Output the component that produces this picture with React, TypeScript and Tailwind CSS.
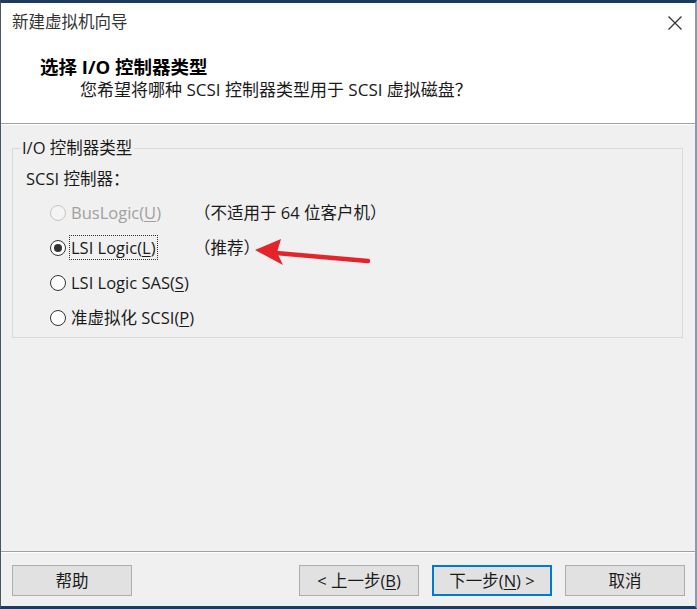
import React from "react";

const font = "font-['Open_Sans','Noto_Sans_CJK_SC',sans-serif]";

function Radio({ checked, disabled }: { checked?: boolean; disabled?: boolean }) {
  return (
    <span
      className={`flex h-[16px] w-[16px] shrink-0 items-center justify-center rounded-full border ${
        disabled ? "border-[#c4c4c4] bg-[#f4f4f4]" : "border-[#333333] bg-white"
      }`}
    >
      {checked && <span className="h-[8px] w-[8px] rounded-full bg-[#333333]" />}
    </span>
  );
}

function Row({
  label,
  keyChar,
  note,
  checked,
  disabled,
  focus,
}: {
  label: string;
  keyChar: string;
  note?: string;
  checked?: boolean;
  disabled?: boolean;
  focus?: boolean;
}) {
  return (
    <div className="ml-[24px] flex h-[20px] items-center whitespace-nowrap">
      <Radio checked={checked} disabled={disabled} />
      <div className="ml-[4px] w-[124px] shrink-0 whitespace-nowrap">
        <span
          className={`px-[1px] ${disabled ? "text-[#a0a0a0]" : "text-[#1a1a1a]"} ${
            focus ? "outline outline-1 outline-dotted outline-[#333]" : ""
          }`}
        >
          {label}(<span className="underline underline-offset-2">{keyChar}</span>)
        </span>
      </div>
      {note && <span className="text-[#1a1a1a]">{note}</span>}
    </div>
  );
}

function Btn({ children, primary }: { children: React.ReactNode; primary?: boolean }) {
  return (
    <div
      className={`flex h-[31px] w-[120px] items-center justify-center whitespace-nowrap bg-[#e1e1e1] text-[#1a1a1a] ${
        primary ? "border-2 border-[#0078d7]" : "border border-[#adadad]"
      }`}
    >
      {children}
    </div>
  );
}

export default function App() {
  return (
    <div
      className={`relative flex h-[609px] w-[697px] flex-col overflow-hidden border-t-[3px] border-b-[3px] border-l border-r-2 border-t-[#1d3a63] border-b-[#1d3a63] border-l-[#4a5568] border-r-[#8e9aab] bg-[#f0f0f0] text-[16.5px] leading-[20px] ${font}`}
    >
      {/* Header */}
      <div className="flex h-[120px] flex-col bg-white pt-[9px]">
        <div className="flex h-[20px] items-center justify-between pl-[11px] pr-[12px]">
          <span className="text-[#333333]">新建虚拟机向导</span>
          <svg width="16" height="16" viewBox="0 0 16 16" className="mt-[2px]">
            <path d="M1.5 1.5 L14.5 14.5 M14.5 1.5 L1.5 14.5" stroke="#333" strokeWidth="1.3" />
          </svg>
        </div>
        <div className="mt-[25px] pl-[39px] text-[18.5px] font-bold text-black">选择 I/O 控制器类型</div>
        <div className="mt-[3px] pl-[79px] text-[17px] text-[#1a1a1a]">您希望将哪种 SCSI 控制器类型用于 SCSI 虚拟磁盘？</div>
      </div>
      <div className="h-[1px] bg-[#a0a0a0]" />
      <div className="h-[1px] bg-white" />

      {/* Body */}
      <div className="flex flex-1 flex-col">
        <fieldset className="ml-[11px] mr-[12px] mt-[13px] border border-[#d9d9d9]">
          <legend className="ml-[7px] px-[2px] text-[#1a1a1a]">I/O 控制器类型</legend>
          <div className="pb-[9px] pl-[13px] pt-[11px]">
            <div className="text-[#1a1a1a]">SCSI 控制器：</div>
            <div className="mt-[14px] flex flex-col gap-[15px]">
              <Row label="BusLogic" keyChar="U" note="（不适用于 64 位客户机）" disabled />
              <Row label="LSI Logic" keyChar="L" note="（推荐）" checked focus />
              <Row label="LSI Logic SAS" keyChar="S" />
              <Row label="准虚拟化 SCSI" keyChar="P" />
            </div>
          </div>
        </fieldset>
        <div className="flex-1" />
        <div className="h-[1px] bg-[#a0a0a0]" />
        <div className="h-[1px] bg-white" />
        <div className="mb-[10px] mt-[12px] flex items-center pl-[11px] pr-[10px]">
          <Btn>帮助</Btn>
          <div className="flex-1" />
          <Btn>
            &lt; 上一步(<span className="underline underline-offset-2">B</span>)
          </Btn>
          <div className="ml-[13px]">
            <Btn primary>
              下一步(<span className="underline underline-offset-2">N</span>) &gt;
            </Btn>
          </div>
          <div className="ml-[13px]">
            <Btn>取消</Btn>
          </div>
        </div>
      </div>

      {/* Red annotation arrow */}
      <svg
        className="pointer-events-none absolute left-[249px] top-[233px]"
        width="125"
        height="34"
        viewBox="0 0 125 34"
      >
        <line x1="26" y1="17" x2="118" y2="25" stroke="#e3242b" strokeWidth="4.5" strokeLinecap="round" />
        <polygon points="5,14 31,3 27,16.5 33,29" fill="#e3242b" />
      </svg>
    </div>
  );
}
